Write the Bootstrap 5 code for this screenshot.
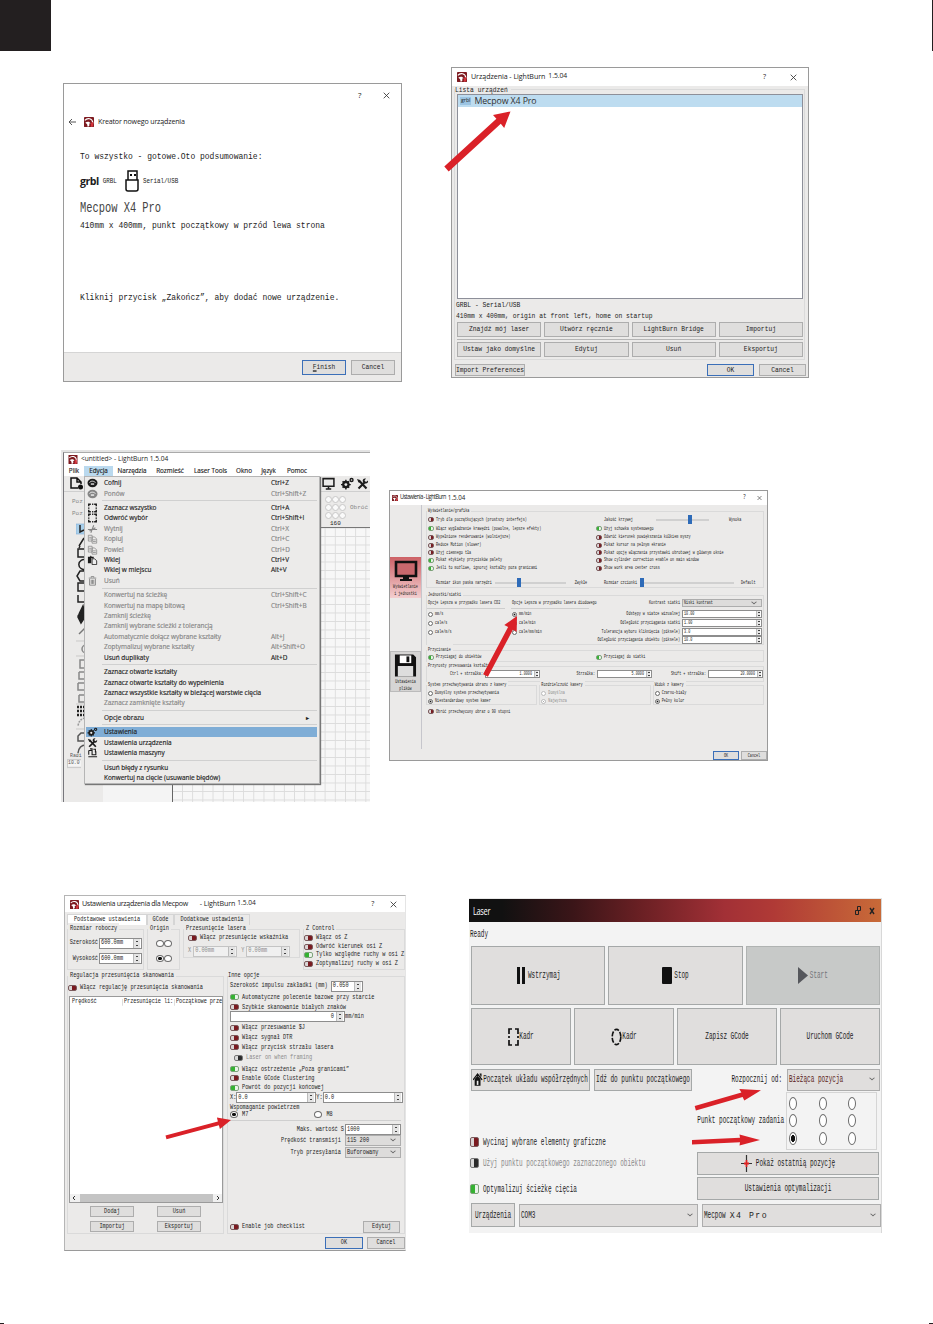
<!DOCTYPE html>
<html lang="pl">
<head>
    <meta charset="UTF-8">
    <meta name="viewport" content="width=device-width, initial-scale=1.0">
    <title>LightBurn - konfiguracja urządzenia</title>
    <link href="https://cdn.jsdelivr.net/npm/bootstrap@5.3.0/dist/css/bootstrap.min.css" rel="stylesheet">
    <style>
        body { width: 933px; height: 1324px; overflow: hidden; background: #fff; color: #1c1c1c; position: relative; font-family: "Open Sans", "Noto Sans", sans-serif; font-size: 8px; line-height: 1; }
        svg { display: block; flex: none; }

        /* strona instrukcji */
        .page-top { height: 51px; }
        .page-tab { width: 51px; background: #231f20; }
        .page-edge { width: 1px; background: #231f20; }
        .band-a { height: 399px; }
        .band-b { height: 445px; }
        .band-c { height: 428px; }
        .page-foot { height: 1px; }
        .page-foot i { width: 4px; background: #231f20; }
        .arrows { position: absolute; left: 0; top: 0; fill: #da2128; }

        /* wspólne elementy okien */
        .win { border: 1px solid #9a9a9a; background: #ebeae9; flex: none; --bg: #ebeae9; --dy: .6px; }
        .win span { display: inline-block; flex: none; white-space: pre; line-height: 1; font-family: "Liberation Mono", monospace; font-size: var(--fs); transform: translateY(var(--dy)) scaleY(var(--sy)); }
        .win span.ui { font-family: "Open Sans", "Noto Sans", sans-serif; transform: none; }
        .titlebar { background: #fff; display: flex; align-items: center; }
        .lines { display: grid; align-items: end; }
        .lines > * { height: 12px; display: flex; align-items: center; min-width: 0; }
        .gb { border: 1px solid #dadada; }
        .gb-title { background: var(--bg); justify-self: start; padding: 0 2px; }
        .wbtn { display: flex; align-items: center; justify-content: center; padding: 0; border: 1px solid #adadad; border-radius: 0; background: #dfdedd; height: 12px; color: #1c1c1c; flex: none; line-height: 1; }
        .wbtn.main { border: 1.5px solid #3b6fb8; }
        .fld { display: flex; align-items: center; border: 1px solid #8d8d8d; background: #fff; height: var(--fh); padding: 0 1px; flex: none; }
        .fld.spin::after { content: ""; order: 3; width: var(--sw); height: 100%; margin-left: auto; background: linear-gradient(#444, #444) center 25% / 2px 1px no-repeat, linear-gradient(#444, #444) center 75% / 2px 1px no-repeat, #e4e4e4; border-left: 1px solid #bbb; }
        .fld.num { justify-content: flex-end; }
        .fld.num.spin::after { margin-left: 2px; }
        .fld.off { background: #f0f0f0; border-color: #c4c4c4; }
        .sel { background: #dddcdb; border-color: #adadad; }
        .sel::after { content: ""; width: 4px; height: 4px; margin: 0 4px 3px auto; border: solid #666; border-width: 0 1px 1px 0; transform: scaleY(.8) rotate(45deg); }
        .tg { display: block; flex: none; width: var(--tw); height: var(--th); border: 1px solid #7b5a5c; border-radius: 2px; background: linear-gradient(90deg, #d9d5d5 42%, #7a1a20 42%); }
        .tg.on { border-color: #7da37a; background: linear-gradient(90deg, #35b232 55%, #eaf3ea 55%); }
        .tg.dis { border-color: #777; background: linear-gradient(90deg, #d9d9d9 42%, #2b2b2b 42%); }
        .rd { display: block; flex: none; width: var(--rw); height: var(--rh); border: 1px solid #6b6b6b; border-radius: 50%; background: #fff; }
        .rd.on { background: radial-gradient(closest-side, #111 60%, #fff 70%); }
        .rd.dis { border-color: #bbb; }
        .rd.on.dis { background: radial-gradient(closest-side, #aaa 55%, #fff 65%); }
        .dim, .win span.dim { color: #8b8b8b; }

        /* kreator */
        .w-wizard { width: 339px; height: 299px; margin: 32px 0 0 63px; --fs: 8px; --sy: 1.18; background: #fff; }
        .w-wizard .lines { height: 268px; padding-left: 16px; grid-template-rows: 17px 27px 34px 25px 27px 17px 72px; align-content: start; }
        .w-wizard .top-btns { padding-left: 278px; gap: 22px; }
        .w-wizard .crumb { margin-left: -12px; }
        .w-wizard .crumb span.ui { font-size: 7.1px; letter-spacing: -.17px; }
        .w-wizard .logo-grbl { font-family: "Open Sans", sans-serif; font-weight: 700; font-size: 10.6px; letter-spacing: -.5px; transform: none; }
        .w-wizard .tiny { font-size: 5.9px; transform: translateY(1px) scaleY(1.35); }
        .w-wizard .big { font-size: 10.4px; transform: scaleY(1.45); color: #444; }
        .w-wizard .foot { height: 29px; border-top: 1px solid #d5d5d5; background: #ebeae9; padding: 0 6px; gap: 5px; }
        .w-wizard .foot .wbtn { width: 44px; height: 15px; }
        .w-wizard .foot span { font-size: 6.2px; transform: translateY(.8px) scaleY(1.3); }

        /* lista urządzeń */
        .w-dev { width: 358px; height: 311px; margin: 16px 0 0 49px; --fs: 6.3px; --sy: 1.15; }
        .w-dev .titlebar { height: 18px; padding: 0 11px 0 5px; }
        .w-dev .titlebar .ui { font-size: 7.1px; margin-left: 4px; letter-spacing: -.05px; }
        .w-dev .titlebar .ver { margin: 0 0 2px 3px; font-size: 6.8px; }
        .w-dev .dev-group { margin: 3px 3px 0 2px; height: 271px; padding: 0 1px 0 2px; }
        .w-dev .gb-title { margin: -3px 0 0 -2px; padding: 0 3px 0 0; display: flex; align-items: center; width: max-content; height: 7px; }
        .w-dev .dev-list { height: 205px; border: 1px solid #8d8f99; background: #fff; }
        .w-dev .dev-sel { height: 12px; background: #bddcf0; padding-left: 2px; }
        .w-dev .dev-sel .chip { font-size: 5.2px; background: #9cc4e2; padding: 1px; }
        .w-dev .dev-sel .name { font-size: 8.8px; margin-left: 3px; color: #333; letter-spacing: -.1px; }
        .w-dev .info { display: grid; grid-template-rows: 12px 11px; height: 23px; align-items: center; margin-left: -1px; }
        .w-dev .btn-grid { display: grid; grid-template-columns: repeat(4, 1fr); column-gap: 3px; }
        .w-dev .btn-grid .wbtn { height: 15px; }
        .w-dev .rule { height: 1px; background: #b5b5b5; margin: 2px 0; }
        .w-dev .foot { padding: 4px 2px 0 3px; gap: 5px; }
        .w-dev .foot .b-foot { width: 47px; }

        /* okno główne z menu */
        .w-main { width: 309px; height: 352px; margin-left: 61px; background: #ebeae9; border: 0; border-left: 1px solid #e8e8e8; border-top: 2px solid #e3e3e3; overflow: hidden; --fs: 6px; --sy: 1; }
        .w-main .frame { border-left: 1px solid #77777c; border-top: 1px solid #aaa; margin-left: 1px; height: 350px; position: relative; }
        .w-main .titlebar { height: 13px; padding-left: 4px; }
        .w-main .titlebar .ui { font-size: 6.6px; margin-left: 3px; }
        .w-main .menubar { height: 10px; background: #fff; }
        .w-main .menubar .ui { font-size: 6.3px; line-height: 10px; text-align: center; -webkit-text-stroke: .15px #222; }
        .w-main .menubar .cur { background: #bad9ee; }
        .w-main .bar-1 { height: 16px; border-bottom: 1px solid #cfcfcf; padding: 0 1px 0 6px; }
        .w-main .bar-1 .scr { margin: 0 6px 0 auto; }
        .w-main .bar-1 .gear { margin-right: 2px; }
        .w-main .bar-2 { height: 30px; padding-left: 8px; color: #888; }
        .w-main .bar-2 .poz { display: grid; grid-template-rows: 12px 12px; align-content: center; align-items: center; width: 253px; }
        .w-main .nine { display: grid; grid-template-columns: repeat(3, 7px); grid-auto-rows: 7px; gap: 1px 0; margin-right: 4px; }
        .w-main .nine i { border: 1px solid #c8c8c8; border-radius: 50%; background: #fafafa; }
        .w-main .side { width: 39px; padding-left: 12px; }
        .w-main .side span { display: block; width: 12px; margin: 0 0 1px -6px; font-size: 4.8px; transform: scaleY(1.3); color: #555; }
        .w-main .side .radius { background: #f4f4f4; border: 1px solid #ccc; border-right: 0; width: 14px; margin-left: -9px; }
        .w-main .canvas-box { flex: 1; background: #ebeae9; }
        .w-main .ruler { height: 6px; border-bottom: 1px solid #777; padding-left: 227px; }
        .w-main .ruler span { transform: translateY(-1px); }
        .w-main .field-a { width: 69px; background: #f4f4f4; }
        .w-main .field-b { flex: 1; border-left: 1.5px solid #666; background: linear-gradient(90deg, #dcdcdc 1px, transparent 1px) 9px 0 / 10.2px 10px, linear-gradient(#dcdcdc 1px, transparent 1px) 0 8px / 10px 8.5px, #f7f7f7; }
        .w-main .field { height: 274px; }
        .edit-menu { position: absolute; left: 20px; top: 23px; width: 236px; height: 308px; padding: 1px 2px 0 1px; background: #ecebea; border: 1px solid #b5b5b5; box-shadow: 1px 1px 1px #777; }
        .edit-menu .mi { height: 10.4px; display: grid; grid-template-columns: 18px 167px 1fr; align-items: center; }
        .edit-menu .mi .ui { font-size: 6.45px; line-height: 10px; -webkit-text-stroke: .15px currentColor; }
        .edit-menu .mi.hot { background: #7fadd6; }
        .edit-menu .mi.gray { color: #858585; }
        .edit-menu .mi svg { margin-left: 1px; }
        .edit-menu hr { height: 1px; margin: 1.5px 0 1.6px 16px; border: 0; background: #d0d0d0; opacity: 1; }

        /* ustawienia programu */
        .w-set { width: 379px; height: 271px; margin: 40px 0 0 19px; --dy: .9px; --fs: 3.44px; --sy: 1.75; --tw: 6px; --th: 5px; --rw: 5px; --rh: 5px; --fh: 8px; --sw: 4px; }
        .w-set .titlebar { height: 14px; padding: 0 5px 0 2px; }
        .w-set .titlebar .ui { font-size: 5.5px; letter-spacing: -.55px; margin-left: 2px; transform: scaleY(1.15); }
        .w-set .titlebar .ver { font-size: 6.2px; letter-spacing: 0; }
        .w-set .nav-col { width: 31px; padding-top: 52px; }
        .w-set .tile { height: 41px; display: grid; grid-template-rows: 26px 7px 7px; justify-items: center; align-items: center; background: linear-gradient(#cd6166, #f3cfd0); }
        .w-set .tile.disk { margin-top: 53px; background: #d6d5d4; border: 1px solid #bbb; }
        .w-set .nav-line { width: 1px; height: 244px; background: #c6c6cc; }
        .w-set .main-col { width: 338px; margin-left: 4px; padding-top: 6px; }
        .w-set .tg, .w-set .rd { margin-right: 2px; }
        .w-set .lines > * { padding-left: 1px; }
        .w-set .g1 { height: 77px; grid-template-columns: 168px 1fr; grid-template-rows: 5px 8.5px 9px 8.5px 8px 7.5px 7.5px 8px 15px; }
        .w-set .g1 .gb-title, .w-set .g2 .gb-title { grid-column: 1 / -1; }
        .w-set .track { height: 2px; background: #d0d0d0; position: relative; flex: none; }
        .w-set .track::before { content: ""; position: absolute; top: -4px; width: 4px; height: 9px; background: #2e6bb8; }
        .w-set .t-curve { width: 53px; margin: 0 20px 0 23px; }
        .w-set .t-curve::before { left: 32px; }
        .w-set .t-icon { width: 71px; margin: 0 9px 0 3px; }
        .w-set .t-icon::before { left: 22px; }
        .w-set .t-font { width: 94px; margin: 0 7px 0 3px; }
        .w-set .t-font::before { left: 0; }
        .w-set .g2 { margin-top: 7px; height: 50px; grid-template-columns: 84px 84px 1fr; grid-template-rows: 5px 8px 11px 9px 9px 8px; }
        .w-set .g2 .under { border-bottom: 1px solid #cdcdcd; margin-right: 6px; }
        .w-set .g2 .fld { width: 80px; margin: 0 1px 0 2px; }
        .w-set .g3 { margin-top: 5px; height: 12px; grid-template-columns: 168px 1fr; grid-template-rows: 5px 7px; }
        .w-set .g4 { margin-top: 4px; height: 16px; grid-template-columns: 113px 112px 111px; grid-template-rows: 5px 8px; }
        .w-set .g3 .gb-title, .w-set .g4 .gb-title { grid-column: 1 / -1; }
        .w-set .g4 .fld { width: 55px; margin-left: 2px; }
        .w-set .g5 { margin-top: 3px; gap: 2px; }
        .w-set .g5 .gb { flex: 1; height: 20px; grid-template-rows: 5px 8px 8px; }
        .w-set .last { height: 13px; padding-left: 2px; }
        .w-set .foot { margin-top: 33px; gap: 2px; margin-right: -3px; }
        .w-set .foot .wbtn { width: 26px; height: 9px; }

        /* ustawienia urządzenia */
        .w-mach { width: 342px; height: 356px; margin: 0 0 0 64px; --dy: 1px; --fs: 5.25px; --sy: 1.3; --tw: 9px; --th: 6px; --rw: 8px; --rh: 7px; --fh: 11px; --sw: 7px; border-color: #b5b5b5 #e5e5e5 #9a9a9a #b5b5b5; }
        .w-mach .titlebar { height: 16px; padding: 0 8px 0 5px; }
        .w-mach .titlebar .ui { font-size: 7.1px; margin-left: 3px; letter-spacing: -.32px; }
        .w-mach .titlebar .app { letter-spacing: -.1px; }
        .w-mach .titlebar .ver { margin: 0 0 2px 2px; font-size: 6.6px; letter-spacing: 0; }
        .w-mach .tabs { padding: 2px 0 0 2px; height: 13px; }
        .w-mach .tabs div { display: flex; align-items: center; justify-content: center; height: 11px; border: 1px solid #d5d5d5; border-bottom: 0; }
        .w-mach .tabs .t1 { width: 80px; background: #fff; }
        .w-mach .tabs .t2 { width: 27px; }
        .w-mach .tabs .t3 { width: 76px; }
        .w-mach .tg { margin-right: 3px; }
        .w-mach .row-1 { margin: 4px 0 0 2px; height: 41px; gap: 3px; }
        .w-mach .g-size { width: 77px; grid-template-rows: 5px 14px 15.5px; }
        .w-mach .g-size .fld { width: 43px; margin: 0 1px; }
        .w-mach .g-org { width: 33px; grid-template-rows: 5px 14px 15.5px; }
        .w-mach .g-org .rd { width: 8px; height: 7px; }
        .w-mach .g-las { width: 117px; height: 29px; grid-template-rows: 5px 9px 13px; }
        .w-mach .g-las .fld { width: 44px; margin: 0 4px 0 2px; }
        .w-mach .g-z { width: 102px; grid-template-rows: 5px 9px 8.5px 8.5px 8.5px; }
        .w-mach .row-2 { margin: 6px 0 0 2px; height: 258px; gap: 3px; }
        .w-mach .g-scan { width: 157px; grid-template-rows: 5px 12px 208.5px 15px 15px; align-content: start; }
        .w-mach .g-scan .table-box { height: 207px; margin-left: 1px; width: 154px; display: flex; flex-direction: column; border: 1px solid #9a9a9a; background: #fff; align-items: stretch; }
        .w-mach .heads { height: 11px; display: grid; grid-template-columns: 51px 52px 1fr; align-items: center; padding-left: 1px; }
        .w-mach .heads span { border-left: 1px solid #ddd; padding-left: 1px; letter-spacing: -.08px; }
        .w-mach .heads span:first-child { border: 0; }
        .w-mach .scroll { height: 8px; background: #f0f0f0; margin-top: auto; padding: 0 2px; }
        .w-mach .scroll i { width: 133px; height: 8px; background: #c4c4c4; }
        .w-mach .pair { padding-left: 22px; gap: 23px; }
        .w-mach .pair .wbtn { width: 44px; height: 11px; }
        .w-mach .g-opt { width: 178px; grid-template-rows: 5px 10px 11.3px 10.2px 9.5px 11px 10px 9.5px 10.5px 11.5px 9px 9.5px 10px 9.5px 8px 14px 11.5px 12px 74px; }
        .w-mach .g-opt > div { padding-left: 2px; }
        .w-mach .w32 { width: 32px; }
        .w-mach .w115 { width: 115px; }
        .w-mach .w80 { width: 80px; }
        .w-mach .w55 { width: 56px; margin: 0 3px 0 1px; }
        .w-mach .air { border: solid #cfcfcf; border-width: 0 0 1px; margin-right: 3px; }
        .w-mach .foot { gap: 4px; padding: 3px 0 0; }
        .w-mach .foot .wbtn { width: 38px; height: 12px; }

        /* panel lasera */
        .w-laser { width: 413px; height: 335px; margin: 3px 0 0 63px; background: #f3f3f3; border: 0; border-top: 1px solid #e8e8e8; border-right: 1px solid #d8d8d8; --dy: 1.3px; --fs: 6.03px; --sy: 1.75; --tw: 9px; --th: 10px; --rw: 8px; --rh: 13px; --fh: 22px; }
        .w-laser .head { height: 23px; padding: 0 6px 0 4px; background: linear-gradient(90deg, #111 8%, #3a1518 25%, #6b2024 42%, #a23036 62%, #b03a36 74%, #c86a38); }
        .w-laser .head .ui { color: #fff; font-size: 7.4px; letter-spacing: -.3px; transform: translateY(.5px) scaleY(1.5); }
        .w-laser .ready { height: 24px; padding-left: 1px; }
        .w-laser .wbtn { background: #e0dedd; border: 1px solid #a5a8a8; }
        .w-laser .big-row { display: grid; column-gap: 3px; margin: 0 1px 3px 2px; }
        .w-laser .r3 { grid-template-columns: repeat(3, 1fr); }
        .w-laser .r4 { grid-template-columns: repeat(4, 1fr); }
        .w-laser .r3 .wbtn { height: 59px; }
        .w-laser .r3 svg { margin-right: 2px; }
        .w-laser .r4 .wbtn { height: 57px; }
        .w-laser .wbtn.idle { background: #c7c9c8; color: #73757a; border-color: #b0b3b2; }
        .w-laser .home-row { margin-left: 2px; height: 23px; }
        .w-laser .home-row .wbtn { height: 22px; }
        .w-laser .b-home { width: 119px; }
        .w-laser .b-goto { width: 98px; margin: 0 auto 0 4px; }
        .w-laser .s-start { width: 93px; margin: 0 1px 0 5px; background: #e0dedd; color: #5b1d20; padding-left: 1px; }
        .w-laser .mid { height: 111px; }
        .w-laser .opts { width: 226px; padding-left: 1px; grid-template-rows: 57px 21px 26px; align-content: start; }
        .w-laser .opts .tg { margin-right: 4px; }
        .w-laser .job { width: 186px; padding-right: 2px; }
        .w-laser .nine-box { width: 91px; height: 58px; border: 1px solid #d5d5d5; display: grid; grid-template-columns: 30px 29px 1fr; grid-template-rows: repeat(3, 1fr); align-items: center; margin: 1px 2px 0 2px; padding: 2px 0 2px 2px; }
        .w-laser .job .wbtn { height: 23px; margin: 2px 0 0 2px; }
        .w-laser .port-row { margin: 1px 1px 0 2px; }
        .w-laser .port-row .wbtn { width: 44px; height: 24px; }
        .w-laser .port-row .sel { height: 23px; width: 179px; margin-left: 4px; background: #e0dedd; }
        .w-laser .wide { font-size: 8.2px; transform: translateY(.5px) scaleY(1.1); letter-spacing: 1.5px; }
    </style>
</head>
<body>
    <svg width="0" height="0" class="position-absolute">
        <defs>
            <symbol id="logo" viewBox="0 0 24 24"><rect width="24" height="24" rx="1" fill="#7d1a20"/><path d="M2 8C8 1 20 3 21 13c0 4-1 7-3 9" fill="none" stroke="#fff" stroke-width="2.800"/><path d="M8 23c1-5-1-7-5-9 4-4 10-4 13 1l-4 1c2 3 1 5-1 7z" fill="#fff"/><path d="M17 14l5-2v11h-6z" fill="#d5323a"/></symbol>
            <symbol id="xmark" viewBox="0 0 10 10"><path d="M1 1l8 8M9 1L1 9" stroke="#333" stroke-width="1.2"/></symbol>
            <symbol id="undo" viewBox="0 0 24 24"><ellipse cx="12" cy="12" rx="12" ry="10" fill="currentColor"/><path d="M5 11c3-5 11-4 14 0" fill="none" stroke="#fff" stroke-width="2"/><path d="M8 13h8v3H8z" fill="#fff"/></symbol>
            <symbol id="frame" viewBox="0 0 24 24"><path d="M3 8V3h5M16 3h5v5M21 16v5h-5M8 21H3v-5M11 3h3M11 21h3M3 11v3M21 11v3" fill="none" stroke="currentColor" stroke-width="3.400"/></symbol>
            <symbol id="cut" viewBox="0 0 24 24"><path d="M1 13h22M8 21L15 3M5 17l4-4M14 12l5-3" fill="none" stroke="currentColor" stroke-width="2.600"/></symbol>
            <symbol id="copy" viewBox="0 0 24 24"><path d="M2 3h9v14H2zM11 7h6l5 5v10H11zM4 8h5M4 12h5M13 14h7M13 18h7" fill="none" stroke="currentColor" stroke-width="1.800"/></symbol>
            <symbol id="paste" viewBox="0 0 24 24"><path d="M1 4h5l2-3 2 3h5v4H9v12H1z" fill="currentColor"/><path d="M11 9h6l5 5v9H11z" fill="#eee" stroke="currentColor" stroke-width="2"/></symbol>
            <symbol id="trash" viewBox="0 0 24 24"><path d="M3 5h18M9 4V1h6v3M5 7v15h14V7M9 9v10M12 9v10M15 9v10" fill="none" stroke="currentColor" stroke-width="2.200"/></symbol>
            <symbol id="gears" viewBox="0 0 24 24"><circle cx="9" cy="14" r="5" fill="none" stroke="currentColor" stroke-width="4"/><path d="M9 5v18M0 14h18M3 8l12 12M15 8L3 20" stroke="currentColor" stroke-width="2.600"/><circle cx="9" cy="14" r="2.600" fill="#ecebea"/><circle cx="19.500" cy="5.500" r="2.700" fill="none" stroke="currentColor" stroke-width="2.600"/></symbol>
            <symbol id="tools" viewBox="0 0 24 24"><path d="M5 5l15 16M4 21L17 8" stroke="currentColor" stroke-width="4.200"/><path d="M1 2l6 2 1 5-4 0z" fill="currentColor"/><path d="M23 5l-4 3-3-3 3-4c-5-1-8 3-6 7l4 3c4 1 7-2 6-6z" fill="currentColor"/></symbol>
            <symbol id="machine" viewBox="0 0 24 24"><path d="M3 6h8v10h9V8M2 21h21M6 2h5v4M14 3h5v8M3 6v10" fill="none" stroke="currentColor" stroke-width="2.600"/></symbol>
            <symbol id="screen" viewBox="0 0 24 24"><path d="M2 3h20v14H2zM7 22h10M12 17v5" fill="none" stroke="currentColor" stroke-width="2.800"/></symbol>
        </defs>
    </svg>

    <div class="page-top d-flex justify-content-between">
        <div class="page-tab"></div>
        <div class="page-edge"></div>
    </div>

    <div class="band-a d-flex align-items-start">
        <!-- Kreator nowego urządzenia -->
        <div class="win w-wizard">
            <div class="lines">
                <div class="top-btns"><span class="ui">?</span><svg width="7" height="7"><use href="#xmark"/></svg></div>
                <div class="crumb">
                    <svg width="8" height="8" viewBox="0 0 8 8" class="me-2"><path d="M8 4H1M4 1L1 4l3 3" fill="none" stroke="#555"/></svg>
                    <svg width="10" height="10" class="ms-0 me-1"><use href="#logo"/></svg>
                    <span class="ui">Kreator nowego urządzenia</span>
                </div>
                <div><span>To wszystko - gotowe.Oto podsumowanie:</span></div>
                <div>
                    <span class="logo-grbl">grbl</span>
                    <span class="tiny ms-1">GRBL</span>
                    <svg width="14" height="22" viewBox="0 0 14 22" class="ms-2 me-1"><path d="M3 1h9v9H3zM1 10h12v9q0 2-2 2H3q-2 0-2-2z" fill="#fff" stroke="#111" stroke-width="1.500"/><path d="M5 4h2v2H5zM9 4h2v2H9z" fill="#111"/></svg>
                    <span class="tiny">Serial/USB</span>
                </div>
                <div><span class="big">Mecpow X4 Pro</span></div>
                <div><span>410mm x 400mm, punkt początkowy w przód lewa strona</span></div>
                <div><span>Kliknij przycisk „Zakończ”, aby dodać nowe urządzenie.</span></div>
            </div>
            <div class="foot d-flex justify-content-end align-items-center">
                <button type="button" class="btn wbtn main"><span><u>F</u>inish</span></button>
                <button type="button" class="btn wbtn"><span>Cancel</span></button>
            </div>
        </div>

        <!-- Lista urządzeń -->
        <div class="win w-dev">
            <div class="titlebar">
                <svg width="10" height="10"><use href="#logo"/></svg>
                <span class="ui">Urządzenia - LightBurn</span><span class="ui ver">1.5.04</span>
                <span class="ui ms-auto me-4">?</span>
                <svg width="7" height="7"><use href="#xmark"/></svg>
            </div>
            <div class="gb dev-group">
                <div class="gb-title"><span>Lista urządzeń</span></div>
                <div class="dev-list">
                    <div class="dev-sel d-flex align-items-center"><span class="ui chip">grbl</span><span class="ui name">Mecpow X4 Pro</span></div>
                </div>
                <div class="info"><span>GRBL - Serial/USB</span><span>410mm x 400mm, origin at front left, home on startup</span></div>
                <div class="btn-grid">
                    <button type="button" class="btn wbtn"><span>Znajdź mój laser</span></button>
                    <button type="button" class="btn wbtn"><span>Utwórz ręcznie</span></button>
                    <button type="button" class="btn wbtn"><span>LightBurn Bridge</span></button>
                    <button type="button" class="btn wbtn"><span>Importuj</span></button>
                </div>
                <div class="rule"></div>
                <div class="btn-grid">
                    <button type="button" class="btn wbtn"><span>Ustaw jako domyślne</span></button>
                    <button type="button" class="btn wbtn"><span>Edytuj</span></button>
                    <button type="button" class="btn wbtn"><span>Usuń</span></button>
                    <button type="button" class="btn wbtn"><span>Eksportuj</span></button>
                </div>
            </div>
            <div class="foot d-flex">
                <button type="button" class="btn wbtn me-auto"><span>Import Preferences</span></button>
                <button type="button" class="btn wbtn main b-foot"><span>OK</span></button>
                <button type="button" class="btn wbtn b-foot"><span>Cancel</span></button>
            </div>
        </div>
    </div>

    <div class="band-b d-flex align-items-start">
        <!-- Okno główne -->
        <div class="win w-main">
            <div class="frame">
                <div class="titlebar">
                    <svg width="10" height="9"><use href="#logo"/></svg>
                    <span class="ui">&lt;untitled&gt; - LightBurn 1.5.04</span>
                </div>
                <div class="menubar d-flex" id="menuBar"></div>
                <div class="bar-1 d-flex align-items-center">
                    <svg width="14" height="13" viewBox="0 0 14 13"><path d="M8 11H1V1h6l4 4v2M7 1v4h4" fill="none" stroke="#111" stroke-width="1.500"/><circle cx="10.500" cy="10" r="2.500" fill="#111"/></svg>
                    <svg width="13" height="13" class="scr"><use href="#screen"/></svg>
                    <svg width="13" height="13" class="gear"><use href="#gears"/></svg>
                    <svg width="13" height="12"><use href="#tools"/></svg>
                </div>
                <div class="bar-2 d-flex align-items-center">
                    <div class="poz"><span>Poz.</span><span>Poz.</span></div>
                    <div class="nine"><i></i><i></i><i></i><i></i><i></i><i></i><i></i><i></i><i></i></div>
                    <span>Obróć</span>
                </div>
                <div class="d-flex">
                    <div class="side">
                        <svg width="27" height="232" viewBox="0 0 27 232" fill="none" stroke="#222" stroke-width="1.500">
                            <path d="M0 2h12v10H0z" fill="#a8cfea" stroke="#7fadd6" stroke-width=".6"/>
                            <path d="M4 3v7l4-2M3 24l5-8M4 24l-1 2M2 27h8v8H2z"/>
                            <path d="M10 38a5 5 0 1 0 0 9M9 49H4L1 54l3 5h5M9 61H2v8h8M2 73v7h8"/>
                            <path d="M3 92l4-8 2 8M2 95c0-4 7-4 7 0l-4 6z" fill="#222"/>
                            <path d="M3 112l6-6" stroke="#777"/>
                            <path d="M10 123a4 4 0 1 0 0 8M8 138H4v8h6M3 150h8M3 150v7h7M2 161h8M2 161v7h6M3 173h6M3 173v7h6" stroke="#888"/>
                            <path d="M1 185h8M1 189h8M1 193h8" stroke-dasharray="2 1" stroke-width="2.400"/>
                            <path d="M9 196q-6 1-7 8" stroke="#999" stroke-dasharray="2 1"/>
                            <path d="M9 211H5l-3 3v5h8M10 223q-7 0-8 8" stroke="#555"/>
                            <path d="M-8 119h20M-8 134h20M-8 182h20M-8 207h20" stroke="#bbb" stroke-width=".7"/>
                        </svg>
                        <span>Radi</span>
                        <span class="radius">10.0</span>
                    </div>
                    <div class="canvas-box">
                        <div class="ruler d-flex align-items-center"><span>160</span></div>
                        <div class="field d-flex"><div class="field-a"></div><div class="field-b"></div></div>
                    </div>
                </div>
                <div class="edit-menu" id="editMenu"></div>
            </div>
        </div>

        <!-- Ustawienia programu -->
        <div class="win w-set">
            <div class="titlebar">
                <svg width="6" height="8" viewBox="0 0 6 8"><use href="#logo" width="6" height="8"/></svg>
                <span class="ui">Ustawienia - LightBurn</span><span class="ui ver">1.5.04</span>
                <span class="ui ms-auto me-2">?</span>
                <svg width="5" height="6" class="ms-1"><use href="#xmark"/></svg>
            </div>
            <div class="d-flex">
                <div class="nav-col">
                    <div class="tile">
                        <svg width="24" height="24" viewBox="0 0 24 24"><path d="M2 4h20v14H2z" fill="#c9686d" stroke="#111" stroke-width="2.600"/><path d="M9 19h6v2h3v2H6v-2h3z" fill="#111"/></svg>
                        <span>Wyświetlanie</span><span>i jednostki</span>
                    </div>
                    <div class="tile disk">
                        <svg width="23" height="25" viewBox="0 0 24 25"><path d="M1 1h19l3 3v20H1z" fill="#111"/><path d="M6 2h12v8H6z" fill="#fff"/><path d="M13 3h3v6h-3z" fill="#111"/><path d="M4 13h16v11H4z" fill="#ddd"/></svg>
                        <span>Ustawienia</span><span>plików</span>
                    </div>
                </div>
                <div class="nav-line"></div>
                <div class="main-col">
                    <div class="gb lines g1">
                        <div class="gb-title"><span>Wyświetlanie/grafika</span></div>
                        <div><i class="tg"></i><span>Tryb dla początkujących (prostszy interfejs)</span></div>
                        <div><span class="ms-2">Jakość krzywej</span><div class="track t-curve"></div><span>Wysoka</span></div>
                        <div><i class="tg on"></i><span>Włącz wygładzanie krawędzi (powolne, lepsze efekty)</span></div>
                        <div><i class="tg on"></i><span>Użyj schowka systemowego</span></div>
                        <div><i class="tg"></i><span>Wypełnione renderowanie (wolniejsze)</span></div>
                        <div><i class="tg"></i><span>Odwróć kierunek powiększania kółkiem myszy</span></div>
                        <div><i class="tg"></i><span>Reduce Motion (slower)</span></div>
                        <div><i class="tg"></i><span>Pokaż kursor na pełnym ekranie</span></div>
                        <div><i class="tg"></i><span>Użyj ciemnego tła</span></div>
                        <div><i class="tg"></i><span>Pokaż opcję włączania przystawki obrotowej w głównym oknie</span></div>
                        <div><i class="tg on"></i><span>Pokaż etykiety przycisków palety</span></div>
                        <div><i class="tg"></i><span>Show cylinder correction enable on main window</span></div>
                        <div><i class="tg on"></i><span>Jeśli to możliwe, ignoruj kształty poza granicami</span></div>
                        <div><i class="tg"></i><span>Show work area center cross</span></div>
                        <div><span class="ms-2">Rozmiar ikon paska narzędzi</span><div class="track t-icon"></div><span>Zwykłe</span></div>
                        <div><span class="ms-2">Rozmiar czcionki</span><div class="track t-font"></div><span>Default</span></div>
                    </div>
                    <div class="gb lines g2">
                        <div class="gb-title"><span>Jednostki/siatki</span></div>
                        <div class="under"><span>Opcje Lepsza w przypadku lasera CO2</span></div>
                        <div class="under"><span>Opcje Lepsza w przypadku lasera diodowego</span></div>
                        <div class="justify-content-end"><span>Kontrast siatki</span><div class="fld sel"><span>Niski kontrast</span></div></div>
                        <div><i class="rd"></i><span>mm/s</span></div>
                        <div><i class="rd on"></i><span>mm/min</span></div>
                        <div class="justify-content-end"><span>Odstępy w siatce wizualnej</span><div class="fld spin"><span>10.00</span></div></div>
                        <div><i class="rd"></i><span>cale/s</span></div>
                        <div><i class="rd"></i><span>cale/min</span></div>
                        <div class="justify-content-end"><span>Odległość przyciągania siatki</span><div class="fld spin"><span>1.00</span></div></div>
                        <div><i class="rd"></i><span>cale/m/s</span></div>
                        <div><i class="rd"></i><span>cale/mm/min</span></div>
                        <div class="justify-content-end"><span>Tolerancja wyboru kliknięcia (piksele)</span><div class="fld spin"><span>3.0</span></div></div>
                        <div></div>
                        <div></div>
                        <div class="justify-content-end"><span>Odległość przyciągania obiektu (piksele)</span><div class="fld spin"><span>10.0</span></div></div>
                    </div>
                    <div class="gb lines g3">
                        <div class="gb-title"><span>Przycinanie</span></div>
                        <div><i class="tg on"></i><span>Przyciągaj do obiektów</span></div>
                        <div><i class="tg on"></i><span>Przyciągaj do siatki</span></div>
                    </div>
                    <div class="gb lines g4">
                        <div class="gb-title"><span>Przyrosty przesuwania kształtu</span></div>
                        <div class="justify-content-end"><span>Ctrl + strzałka:</span><div class="fld spin num"><span>1.0000</span></div></div>
                        <div class="justify-content-end"><span>Strzałka:</span><div class="fld spin num"><span>5.0000</span></div></div>
                        <div class="justify-content-end"><span>Shift + strzałka:</span><div class="fld spin num"><span>20.0000</span></div></div>
                    </div>
                    <div class="d-flex g5">
                        <div class="gb lines">
                            <div class="gb-title"><span>System przechwytywania obrazu z kamery</span></div>
                            <div><i class="rd"></i><span>Domyślny system przechwytywania</span></div>
                            <div><i class="rd on"></i><span>Niestandardowy system kamer</span></div>
                        </div>
                        <div class="gb lines">
                            <div class="gb-title"><span>Rozdzielczość kamery</span></div>
                            <div><i class="rd dis"></i><span class="dim">Domyślna</span></div>
                            <div><i class="rd on dis"></i><span class="dim">Najwyższa</span></div>
                        </div>
                        <div class="gb lines">
                            <div class="gb-title"><span>Widok z kamery</span></div>
                            <div><i class="rd"></i><span>Czarno-biały</span></div>
                            <div><i class="rd on"></i><span>Pełny kolor</span></div>
                        </div>
                    </div>
                    <div class="last d-flex align-items-center"><i class="tg"></i><span>Obróć przechwycony obraz o 90 stopni</span></div>
                    <div class="foot d-flex justify-content-end">
                        <button type="button" class="btn wbtn main"><span>OK</span></button>
                        <button type="button" class="btn wbtn"><span>Cancel</span></button>
                    </div>
                </div>
            </div>
        </div>
    </div>

    <div class="band-c d-flex align-items-start">
        <!-- Ustawienia urządzenia -->
        <div class="win w-mach">
            <div class="titlebar">
                <svg width="9" height="9"><use href="#logo"/></svg>
                <span class="ui">Ustawienia urządzenia dla Mecpow</span>
                <span class="ui app ms-2 ps-1">- LightBurn</span><span class="ui ver">1.5.04</span>
                <span class="ui ms-auto me-3">?</span>
                <svg width="7" height="7"><use href="#xmark"/></svg>
            </div>
            <div class="tabs d-flex">
                <div class="t1"><span>Podstawowe ustawienia</span></div>
                <div class="t2"><span>GCode</span></div>
                <div class="t3"><span>Dodatkowe ustawienia</span></div>
            </div>
            <div class="row-1 d-flex">
                <div class="gb lines g-size">
                    <div class="gb-title"><span>Rozmiar roboczy</span></div>
                    <div class="justify-content-end"><span>Szerokość</span><div class="fld spin"><span>600.0mm</span></div></div>
                    <div class="justify-content-end"><span>Wysokość</span><div class="fld spin"><span>600.0mm</span></div></div>
                </div>
                <div class="gb lines g-org">
                    <div class="gb-title"><span>Origin</span></div>
                    <div class="justify-content-center"><i class="rd"></i><i class="rd"></i></div>
                    <div class="justify-content-center"><i class="rd on"></i><i class="rd"></i></div>
                </div>
                <div class="gb lines g-las">
                    <div class="gb-title"><span>Przesunięcie lasera</span></div>
                    <div><i class="tg ms-1"></i><span>Włącz przesunięcie wskaźnika</span></div>
                    <div><span class="ms-1 dim">X</span><div class="fld spin off"><span class="dim">0.00mm</span></div><span class="dim">Y</span><div class="fld spin off"><span class="dim">0.00mm</span></div></div>
                </div>
                <div class="gb lines g-z">
                    <div class="gb-title"><span>Z Control</span></div>
                    <div><i class="tg"></i><span>Włącz oś Z</span></div>
                    <div><i class="tg"></i><span>Odwróć kierunek osi Z</span></div>
                    <div><i class="tg on"></i><span>Tylko względne ruchy w osi Z</span></div>
                    <div><i class="tg"></i><span>Zoptymalizuj ruchy w osi Z</span></div>
                </div>
            </div>
            <div class="row-2 d-flex">
                <div class="gb lines g-scan">
                    <div class="gb-title"><span>Regulacja przesunięcia skanowania</span></div>
                    <div><i class="tg"></i><span>Włącz regulację przesunięcia skanowania</span></div>
                    <div class="table-box">
                        <div class="heads"><span>Prędkość</span><span>Przesunięcie li:</span><span>Początkowe prze</span></div>
                        <div class="scroll d-flex align-items-center justify-content-between"><svg width="4" height="6"><path d="M3 1L1 3l2 2" fill="none" stroke="#333"/></svg><i></i><svg width="4" height="6"><path d="M1 1l2 2-2 2" fill="none" stroke="#333"/></svg></div>
                    </div>
                    <div class="pair"><button type="button" class="btn wbtn"><span>Dodaj</span></button><button type="button" class="btn wbtn"><span>Usuń</span></button></div>
                    <div class="pair"><button type="button" class="btn wbtn"><span>Importuj</span></button><button type="button" class="btn wbtn"><span>Eksportuj</span></button></div>
                </div>
                <div class="gb lines g-opt">
                    <div class="gb-title p-0"><span>Inne opcje</span></div>
                    <div><span>Szerokość impulsu zakładki (mm) </span><div class="fld spin w32"><span>0.050</span></div></div>
                    <div><i class="tg on"></i><span>Automatyczne polecenie bazowe przy starcie</span></div>
                    <div><i class="tg"></i><span>Szybkie skanowanie białych znaków</span></div>
                    <div><div class="fld spin num w115"><span>0</span></div><span>mm/min</span></div>
                    <div><i class="tg"></i><span>Włącz przesuwanie $J</span></div>
                    <div><i class="tg"></i><span>Włącz sygnał DTR</span></div>
                    <div><i class="tg"></i><span>Włącz przycisk strzału lasera</span></div>
                    <div><i class="tg dis ms-1"></i><span class="dim">Laser on when framing</span></div>
                    <div><i class="tg on"></i><span>Włącz ostrzeżenie „Poza granicami”</span></div>
                    <div><i class="tg"></i><span>Enable GCode Clustering</span></div>
                    <div><i class="tg on"></i><span>Powrót do pozycji końcowej</span></div>
                    <div><span>X:</span><div class="fld spin w80"><span>0.0</span></div><span>Y:</span><div class="fld spin w80"><span>0.0</span></div></div>
                    <div><span>Wspomaganie powietrzem</span></div>
                    <div class="air"><i class="rd on me-1"></i><span>M7                     </span><i class="rd me-1"></i><span>M8</span></div>
                    <div class="justify-content-end"><span>Maks. wartość S</span><div class="fld spin w55"><span>1000</span></div></div>
                    <div class="justify-content-end"><span>Prędkość transmisji </span><div class="fld sel w55"><span>115 200</span></div></div>
                    <div class="justify-content-end"><span>Tryb przesyłania </span><div class="fld sel w55"><span>Buforowany</span></div></div>
                    <div><i class="tg"></i><span>Enable job checklist</span><button type="button" class="btn wbtn ms-auto me-1 px-2"><span>Edytuj</span></button></div>
                </div>
            </div>
            <div class="foot d-flex justify-content-end">
                <button type="button" class="btn wbtn main"><span>OK</span></button>
                <button type="button" class="btn wbtn"><span>Cancel</span></button>
            </div>
        </div>

        <!-- Panel lasera -->
        <div class="win w-laser">
            <div class="head d-flex align-items-center">
                <span class="ui me-auto">Laser</span>
                <svg width="6" height="9" viewBox="0 0 6 9" class="me-2"><path d="M2.500 .5h3v4h-3zM.5 4.500h3v4h-3z" fill="none" stroke="#222"/></svg>
                <svg width="6" height="8" viewBox="0 0 6 8"><path d="M1 1l4 6M5 1L1 7" stroke="#222" stroke-width="1.400"/></svg>
            </div>
            <div class="ready d-flex align-items-center"><span>Ready</span></div>
            <div class="big-row r3">
                <button type="button" class="btn wbtn"><svg width="10" height="17"><path d="M1 0h3v17H1zM6 0h3v17H6z" fill="#111"/></svg><span>Wstrzymaj</span></button>
                <button type="button" class="btn wbtn"><svg width="10" height="17"><rect width="10" height="17" rx="1" fill="#111"/></svg><span>Stop</span></button>
                <button type="button" class="btn wbtn idle"><svg width="10" height="17"><path d="M0 0l10 8.500L0 17z" fill="#55575c"/></svg><span>Start</span></button>
            </div>
            <div class="big-row r4">
                <button type="button" class="btn wbtn"><svg width="11" height="18" viewBox="0 0 11 18"><path d="M1 6V1h3M7 1h3v5M10 12v5H7M4 17H1v-5M1 8v2M10 8v2" fill="none" stroke="#111" stroke-width="1.700"/></svg><span>Kadr</span></button>
                <button type="button" class="btn wbtn"><svg width="11" height="18" viewBox="0 0 11 18"><ellipse cx="5.500" cy="9" rx="4.300" ry="7.600" fill="none" stroke="#111" stroke-width="1.600" stroke-dasharray="5 1.500"/></svg><span>Kadr</span></button>
                <button type="button" class="btn wbtn"><span>Zapisz GCode</span></button>
                <button type="button" class="btn wbtn"><span>Uruchom GCode</span></button>
            </div>
            <div class="home-row d-flex align-items-center">
                <button type="button" class="btn wbtn b-home"><svg width="10" height="15" viewBox="0 0 12 15"><path d="M0 8l5.500-7L11 8M8 1h1.500v3" fill="none" stroke="#111" stroke-width="1.500"/><path d="M2 7l3.500-4L9 7v8H2z" fill="#111"/><path d="M4.500 9h2v5h-2z" fill="#eee"/></svg><span>Początek układu współrzędnych</span></button>
                <button type="button" class="btn wbtn b-goto"><span>Idź do punktu początkowego</span></button>
                <span>Rozpocznij od:</span>
                <div class="fld sel s-start"><span>Bieżąca pozycja</span></div>
            </div>
            <div class="mid d-flex">
                <div class="lines opts">
                    <div><i class="tg"></i><span>Wycinaj wybrane elementy graficzne</span></div>
                    <div><i class="tg dis"></i><span class="dim">Użyj punktu początkowego zaznaczonego obiektu</span></div>
                    <div><i class="tg on"></i><span>Optymalizuj ścieżkę cięcia</span></div>
                </div>
                <div class="job d-flex flex-column">
                    <div class="d-flex align-items-center justify-content-end">
                        <span>Punkt początkowy zadania</span>
                        <div class="nine-box"><i class="rd"></i><i class="rd"></i><i class="rd"></i><i class="rd"></i><i class="rd"></i><i class="rd"></i><i class="rd on"></i><i class="rd"></i><i class="rd"></i></div>
                    </div>
                    <button type="button" class="btn wbtn"><svg width="11" height="17" viewBox="0 0 11 17" class="me-1"><path d="M5.500 0v5M5.500 12v5M0 8.500h3M8 8.500h3" stroke="#333" stroke-width="1.200"/><path d="M5.500 5v7M3 8.500h5" stroke="#d22" stroke-width="1.800"/></svg><span>Pokaż ostatnią pozycję</span></button>
                    <button type="button" class="btn wbtn"><span>Ustawienia optymalizacji</span></button>
                </div>
            </div>
            <div class="port-row d-flex align-items-center">
                <button type="button" class="btn wbtn"><span>Urządzenia</span></button>
                <div class="fld sel"><span>COM3</span></div>
                <div class="fld sel"><span>Mecpow</span><span class="wide ms-1">X4 Pro</span></div>
            </div>
        </div>
    </div>

    <div class="page-foot d-flex justify-content-between"><i></i><i></i></div>

    <!-- Czerwone strzałki -->
    <svg class="arrows" width="933" height="1324" viewBox="0 0 933 1324">
        <polygon points="444.300,166.500 496.400,118.800 493,115 510.500,111.500 504.200,128 500.800,123.800 448.700,171.500"/>
        <polygon points="483.100,674.200 508.100,627.100 504.300,625.100 517,616 516.700,631.700 512.900,629.700 487.900,676.800"/>
        <polygon points="165.500,1135.400 217.900,1121.400 216.900,1117.500 231,1120 219.900,1129.100 218.900,1125.200 166.500,1139.200"/>
        <polygon points="694.700,1106.100 741.400,1092.500 739.300,1089 761,1090.300 744.300,1100.500 742.600,1096.900 695.900,1110.500"/>
        <polygon points="692,1140 740,1137.700 739.500,1134.500 760,1140 739.500,1145.500 740,1142.300 692,1144.500"/>
    </svg>

    <script src="https://cdn.jsdelivr.net/npm/bootstrap@5.3.0/dist/js/bootstrap.bundle.min.js"></script>
    <script>
        // nazwa i szerokość pozycji paska
        const pasek = [['Plik', 20], ['Edycja', 29], ['Narzędzia', 38], ['Rozmieść', 38], ['Laser Tools', 43], ['Okno', 24], ['Język', 25], ['Pomoc', 32]];

        // tekst, skrót, ikona, nieaktywny
        const pozycje = [
            ['Cofnij', 'Ctrl+Z', 'undo'],
            ['Ponów', 'Ctrl+Shift+Z', 'undo', true],
            null,
            ['Zaznacz wszystko', 'Ctrl+A', 'frame'],
            ['Odwróć wybór', 'Ctrl+Shift+I', 'frame'],
            ['Wytnij', 'Ctrl+X', 'cut', true],
            ['Kopiuj', 'Ctrl+C', 'copy', true],
            ['Powiel', 'Ctrl+D', 'copy', true],
            ['Wklej', 'Ctrl+V', 'paste'],
            ['Wklej w miejscu', 'Alt+V'],
            ['Usuń', '', 'trash', true],
            null,
            ['Konwertuj na ścieżkę', 'Ctrl+Shift+C', '', true],
            ['Konwertuj na mapę bitową', 'Ctrl+Shift+B', '', true],
            ['Zamknij ścieżkę', '', '', true],
            ['Zamknij wybrane ścieżki z tolerancją', '', '', true],
            ['Automatycznie dołącz wybrane kształty', 'Alt+J', '', true],
            ['Zoptymalizuj wybrane kształty', 'Alt+Shift+O', '', true],
            ['Usuń duplikaty', 'Alt+D'],
            null,
            ['Zaznacz otwarte kształty'],
            ['Zaznacz otwarte kształty do wypełnienia'],
            ['Zaznacz wszystkie kształty w bieżącej warstwie cięcia'],
            ['Zaznacz zamknięte kształty', '', '', true],
            null,
            ['Opcje obrazu', '                     ▸'],
            null,
            ['Ustawienia', '', 'gears'],
            ['Ustawienia urządzenia', '', 'tools'],
            ['Ustawienia maszyny', '', 'machine'],
            null,
            ['Usuń błędy z rysunku'],
            ['Konwertuj na cięcie (usuwanie błędów)']
        ];

        document.getElementById('menuBar').innerHTML = pasek.map(([nazwa, szer]) =>
            `<span class="ui ${nazwa === 'Edycja' ? 'cur' : ''}" style="width:${szer}px">${nazwa}</span>`).join('');

        document.getElementById('editMenu').innerHTML = pozycje.map(p => {
            if (!p) {
                return '<hr>';
            }
            const [tekst, skrot, ikona, szary] = p;
            const svg = ikona ? `<svg width="11" height="10"><use href="#${ikona}"/></svg>` : '<i></i>';
            return `<div class="mi ${szary ? 'gray' : ''} ${tekst === 'Ustawienia' ? 'hot' : ''}">${svg}<span class="ui">${tekst}</span><span class="ui">${skrot || ''}</span></div>`;
        }).join('');
    </script>
</body>
</html>
